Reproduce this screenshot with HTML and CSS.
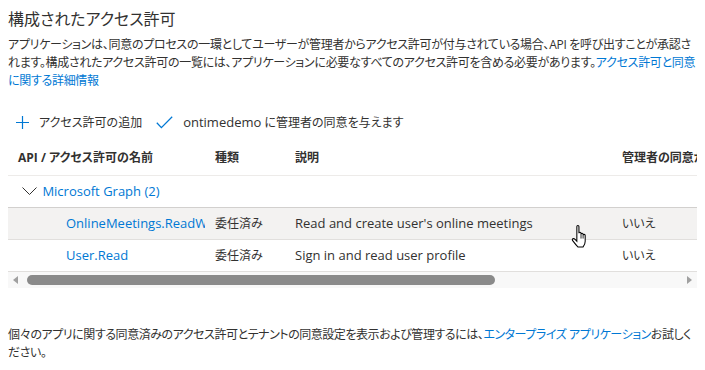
FILE: index.html
```html
<!DOCTYPE html>
<html lang="ja">
<head>
  <meta charset="UTF-8" />
  <meta name="viewport" content="width=device-width, initial-scale=1.0"/>
  <title>構成されたアクセス許可</title>
  <link rel="stylesheet" href="styles.css">
</head>
<body>
  <div class="page">
    <h2 class="title">構成されたアクセス許可</h2>
    <p class="desc">
      アプリケーションは、同意のプロセスの一環としてユーザーが管理者からアクセス許可が付与されている場合、API を呼び出すことが承認されます。構成されたアクセス許可の一覧には、アプリケーションに必要なすべてのアクセス許可を含める必要があります。<a href="#">アクセス許可と同意に関する詳細情報</a>
    </p>

    <!-- Toolbar -->
    <div class="toolbar">
      <button class="tool">
        <svg width="13" height="13" viewBox="0 0 13 13"><path d="M6.5 0v13M0 6.5h13" stroke="#0078d4" stroke-width="1.2" fill="none"/></svg>
        アクセス許可の追加
      </button>
      <button class="tool">
        <svg width="17" height="13" viewBox="0 0 17 13"><path d="M0.8 6.8l4.6 4.8L16.2 0.8" stroke="#0078d4" stroke-width="1.3" fill="none"/></svg>
        <span><span class="en">ontimedemo</span> に管理者の同意を与えます</span>
      </button>
    </div>

    <!-- Permissions grid -->
    <div class="grid-wrap">
      <table class="grid">
        <colgroup>
          <col class="c-name"><col class="c-type"><col class="c-desc"><col class="c-admin">
        </colgroup>
        <thead>
          <tr>
            <th>API / アクセス許可の名前</th>
            <th>種類</th>
            <th>説明</th>
            <th>管理者の同意が必要</th>
          </tr>
        </thead>
        <tbody>
          <tr class="group">
            <td colspan="4" class="en">
              <svg class="chev" width="15" height="8" viewBox="0 0 15 8"><path d="M0.5 0.5l7 7 7-7" stroke="#323130" stroke-width="1" fill="none"/></svg>
              <a href="#">Microsoft Graph (2)</a>
            </td>
          </tr>
          <tr class="hover">
            <td class="perm en"><a href="#">OnlineMeetings.ReadWrite</a></td>
            <td>委任済み</td>
            <td class="en">Read and create user's online meetings</td>
            <td>いいえ</td>
          </tr>
          <tr>
            <td class="perm en"><a href="#">User.Read</a></td>
            <td>委任済み</td>
            <td class="en">Sign in and read user profile</td>
            <td>いいえ</td>
          </tr>
        </tbody>
      </table>

      <!-- Mouse pointer over the hovered row -->
      <svg class="cursor" width="19" height="24" viewBox="0 0 18 23">
        <path d="M5.5 1.5Q5.5 0.5 6.5 0.5Q7.5 0.5 7.5 1.5V8Q7.5 7 8.5 7Q9.5 7 9.5 8V9Q9.5 8 10.5 8Q11.5 8 11.5 9V10Q11.5 9 12.5 9Q13.5 9 13.5 10V15.5Q13.5 18.5 11.5 21H6.5Q4.5 19 1.5 15Q0.7 13.8 1.7 13.2Q2.7 12.7 3.8 13.8L5.5 15.5Z" fill="#fff" stroke="#000" stroke-width="1"/>
        <path d="M9.5 9v4M11.5 10v3" stroke="#000" stroke-width="0.8"/>
      </svg>

      <div class="hscroll">
        <span class="arrow left"></span>
        <div class="track"><div class="thumb"></div></div>
        <span class="arrow right"></span>
      </div>
    </div>

    <p class="note">
      個々のアプリに関する同意済みのアクセス許可とテナントの同意設定を表示および管理するには、<a href="#">エンタープライズ アプリケーション</a>お試しください。
    </p>
  </div>
</body>
</html>
```

FILE: styles.css
```css
body {
  margin: 0;
  font-family: "Segoe UI", "Open Sans", "Noto Sans CJK JP", sans-serif;
  font-size: 12px;
  color: #323130;
  background-color: #ffffff;
  font-feature-settings: "palt";
}
a {
  color: #0078d4;
  text-decoration: none;
}
.en {
  font-size: 13px;
}
.page {
  padding: 8px 8px 0 8px;
}
.title {
  font-size: 16px;
  font-weight: normal;
  line-height: 22px;
  margin: 0;
}
.desc {
  margin: 6px 0 0 0;
  line-height: 18px;
  letter-spacing: -0.3px;
}
.toolbar {
  display: flex;
  gap: 14px;
  margin-top: 16px;
  height: 32px;
  align-items: center;
  padding-left: 8px;
}
.tool {
  display: flex;
  align-items: center;
  gap: 10px;
  background: none;
  border: none;
  padding: 0;
  font: inherit;
  color: #323130;
  cursor: pointer;
}
.grid-wrap {
  position: relative;
  overflow: hidden;
  margin-top: 2px;
}
.grid {
  width: 980px;
  table-layout: fixed;
  border-collapse: collapse;
}
.c-name { width: 197px; }
.c-type { width: 80px; }
.c-desc { width: 327px; }
.grid th,
.grid td {
  text-align: left;
  padding: 0 0 0 10px;
  white-space: nowrap;
  overflow: hidden;
}
.grid th {
  font-weight: bold;
  line-height: 35px;
  border-bottom: 1px solid #edebe9;
}
.grid td {
  line-height: 31px;
  border-bottom: 1px solid #e1dfdd;
}
.grid .group td {
  padding-left: 14px;
  border-bottom-color: #d2d0ce;
}
.chev {
  vertical-align: 1px;
  margin-right: 2px;
}
.grid td.perm {
  padding-left: 58px;
  text-overflow: clip;
}
.grid .hover td {
  background-color: #f3f2f1;
}
.cursor {
  position: absolute;
  left: 563px;
  top: 85px;
}
.hscroll {
  display: flex;
  align-items: center;
  height: 16px;
  background-color: #f8f8f8;
  width: 689px;
}
.arrow {
  width: 0;
  height: 0;
  border-top: 4px solid transparent;
  border-bottom: 4px solid transparent;
}
.arrow.left {
  border-right: 5px solid #a0a0a0;
  margin: 0 8px 0 5px;
}
.arrow.right {
  border-left: 5px solid #a0a0a0;
  margin: 0 5px 0 8px;
}
.track {
  flex: 1;
}
.thumb {
  width: 468px;
  height: 10px;
  border-radius: 5px;
  background-color: #8a8a8a;
  margin-left: 1px;
}
.note {
  margin: 38px 0 0 0;
  line-height: 18px;
  letter-spacing: -0.45px;
}
```
